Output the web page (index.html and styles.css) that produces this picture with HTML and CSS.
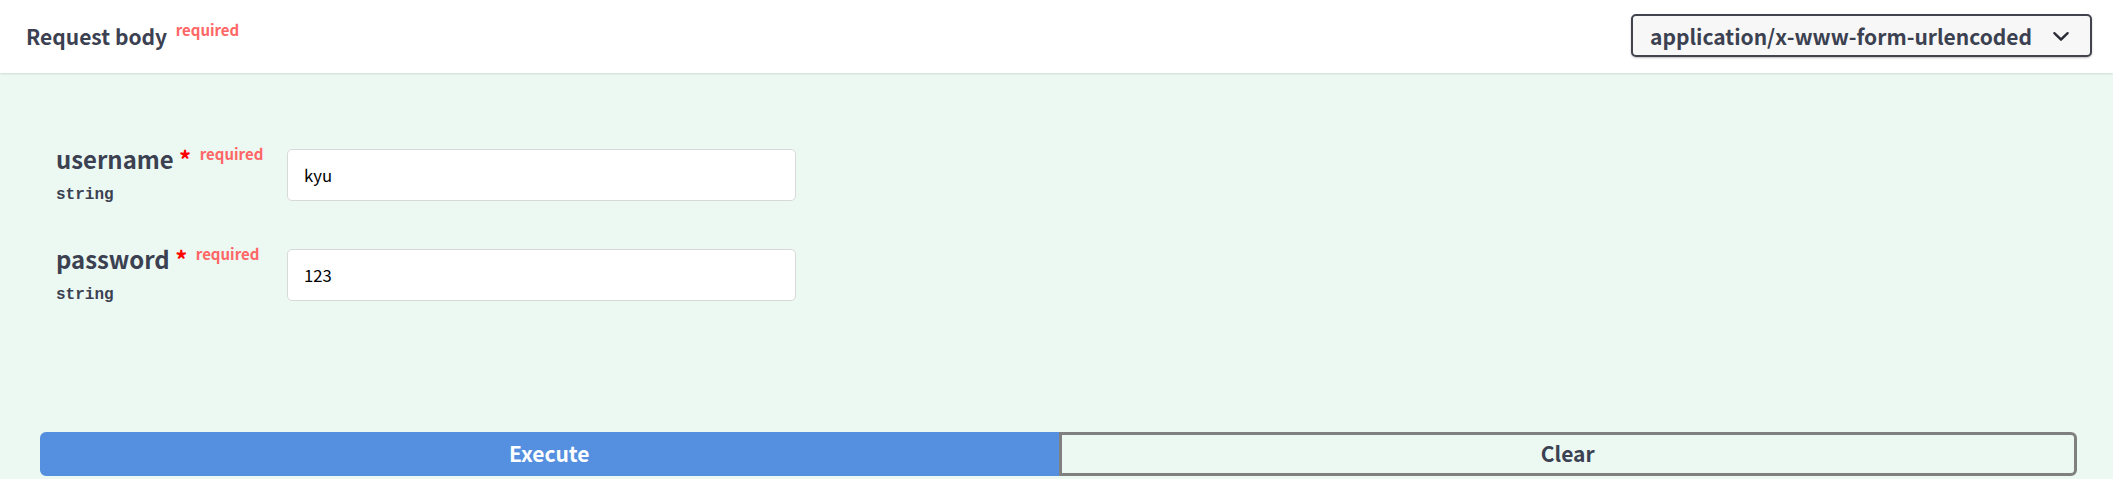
FILE: index.html
```html
<!DOCTYPE html>
<html>
<head>
<meta charset="utf-8">
<title>Request body</title>
<link rel="stylesheet" href="styles.css">
</head>
<body>
<div class="section-header">
  <h4 class="title">Request body<span class="req">required</span></h4>
  <div class="select">
    <span class="select-text">application/x-www-form-urlencoded</span>
    <svg class="chevron" width="34" height="34" viewBox="0 0 20 20"><path d="M13.418 7.859a.695.695 0 01.978 0 .68.68 0 010 .969l-3.908 3.83a.697.697 0 01-.979 0l-3.908-3.83a.68.68 0 010-.969.695.695 0 01.978 0L10 11l3.418-3.141z"/></svg>
  </div>
</div>
<div class="section-body">
  <div class="params">
    <div class="param-row">
      <div class="param-name-col">
        <div class="param-name">username<span class="star">&nbsp;*</span><span class="req">required</span></div>
        <div class="param-type">string</div>
      </div>
      <input class="field" type="text" value="kyu">
    </div>
    <div class="param-row">
      <div class="param-name-col">
        <div class="param-name">password<span class="star">&nbsp;*</span><span class="req">required</span></div>
        <div class="param-type">string</div>
      </div>
      <input class="field" type="text" value="123">
    </div>
  </div>
  <div class="btn-group">
    <button class="btn execute">Execute</button>
    <button class="btn clear">Clear</button>
  </div>
</div>
</body>
</html>
```

FILE: styles.css
```css
html, body {
  margin: 0;
  padding: 0;
}
body {
  font-family: "Noto Sans CJK SC", "Noto Sans", sans-serif;
  color: #3b4151;
  background: #ecf9f3;
  overflow: hidden;
}
.section-header {
  position: relative;
  z-index: 1;
  display: flex;
  justify-content: space-between;
  align-items: flex-start;
  height: 73px;
  box-sizing: border-box;
  padding: 14px 21px 0 26px;
  background: #ffffff;
  box-shadow: 0 1px 2px rgba(0, 0, 0, 0.12);
}
.title {
  margin: 6.8px 0 0;
  font-size: 21px;
  line-height: 30px;
  font-weight: 700;
  color: #3b4151;
}
.req {
  font-size: 15px;
  font-weight: 700;
  color: #ff6666;
  padding-left: 8.5px;
  vertical-align: 9px;
  line-height: 1;
}
.select {
  display: flex;
  align-items: center;
  width: 461px;
  height: 43px;
  box-sizing: border-box;
  padding: 0 12px 0 17px;
  border: 2px solid #41444e;
  border-radius: 5px;
  background: #f7f7f7;
  box-shadow: 0 1px 2px 0 rgba(0, 0, 0, 0.25);
}
.select-text {
  font-size: 21px;
  line-height: 30px;
  font-weight: 700;
  color: #3b4151;
  white-space: nowrap;
}
.chevron {
  margin-left: auto;
  fill: #2b2e36;
}
.section-body {
  height: calc(100vh - 73px);
}
.params {
  display: flex;
  flex-direction: column;
  gap: 39px;
  padding: 70.6px 0 0 56px;
}
.param-row {
  display: flex;
  align-items: flex-start;
}
.param-name-col {
  width: 231px;
}
.param-name {
  font-size: 23.9px;
  line-height: 30px;
  font-weight: 700;
  color: #3b4151;
  white-space: nowrap;
}
.star {
  color: #ff0000;
}
.param-type {
  margin-top: 11px;
  font-family: "Liberation Mono", "DejaVu Sans Mono", monospace;
  font-size: 16px;
  font-weight: 700;
  line-height: 20px;
  color: #3b4151;
}
.field {
  margin: 5.4px 0 0;
  width: 509px;
  height: 52px;
  box-sizing: border-box;
  padding: 0 16px;
  border: 1px solid #d9d9d9;
  border-radius: 5px;
  background: #ffffff;
  font-family: "Noto Sans CJK SC", "Noto Sans", sans-serif;
  font-size: 16.7px;
  color: #000000;
  outline: none;
}
.btn-group {
  display: flex;
  margin-top: 127px;
  padding: 0 36px 0 40px;
}
.btn {
  flex: 1;
  height: 44px;
  box-sizing: border-box;
  font-family: "Noto Sans CJK SC", "Noto Sans", sans-serif;
  font-size: 21px;
  font-weight: 700;
  line-height: 1;
  cursor: pointer;
}
.execute {
  background: #5590e0;
  border: 3px solid #5590e0;
  color: #ffffff;
  border-radius: 6px 0 0 6px;
}
.clear {
  background: transparent;
  border: 3px solid #808080;
  color: #3b4151;
  border-radius: 0 6px 6px 0;
}
```
